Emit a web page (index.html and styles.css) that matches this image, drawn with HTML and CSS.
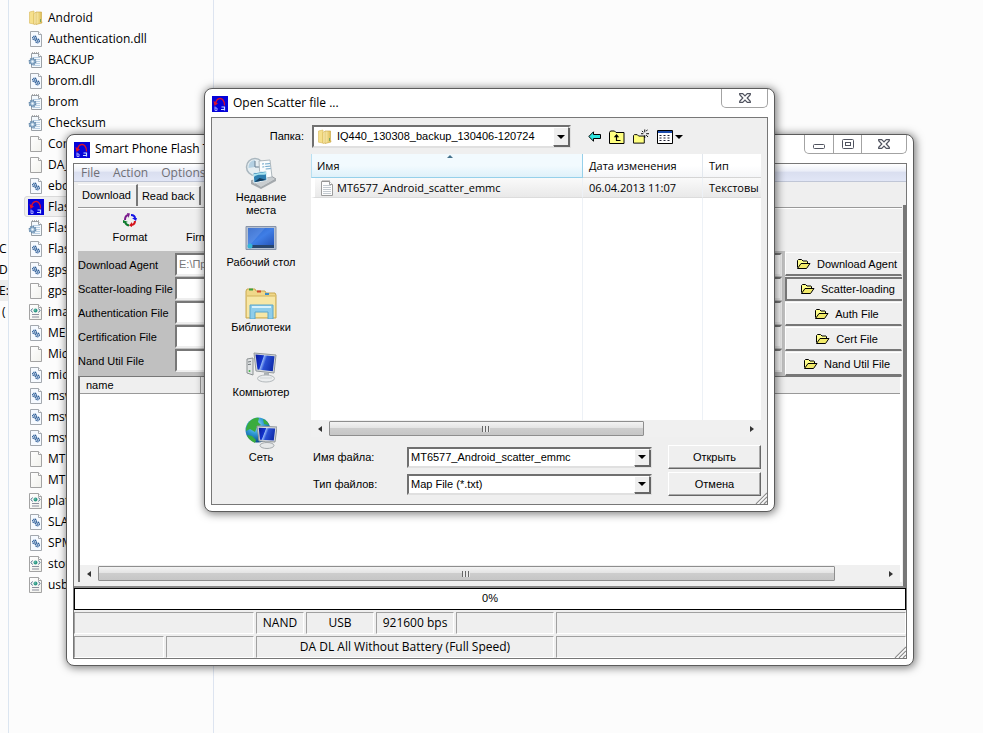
FILE: index.html
```html
<!DOCTYPE html>
<html lang="ru">
<head>
<meta charset="utf-8">
<title>Smart Phone Flash Tool</title>
<link rel="stylesheet" href="styles.css">
</head>
<body>
<svg class="sprite" aria-hidden="true">
  <defs>
    <linearGradient id="gold" x1="0" x2="1"><stop offset="0" stop-color="#fbeeb0"/><stop offset="1" stop-color="#dcb94e"/></linearGradient>
    <linearGradient id="paper" x1="0" y1="0" x2="1" y2="1"><stop offset="0" stop-color="#fff"/><stop offset="1" stop-color="#f1f1ec"/></linearGradient>
    <linearGradient id="screen" x1="0" y1="0" x2="1" y2="1"><stop offset="0" stop-color="#2a62c8"/><stop offset=".5" stop-color="#3f7ee6"/><stop offset="1" stop-color="#2350b4"/></linearGradient>
    <linearGradient id="deep" x1="0" x2="1" y2=".3"><stop offset="0" stop-color="#0a1a9c"/><stop offset=".4" stop-color="#1334cc"/><stop offset=".45" stop-color="#8fb2f6"/><stop offset=".6" stop-color="#2a50d4"/><stop offset="1" stop-color="#1230b0"/></linearGradient>
    <radialGradient id="globe" cx=".4" cy=".3" r=".7"><stop offset="0" stop-color="#a8e4fa"/><stop offset=".5" stop-color="#2f9ad6"/><stop offset="1" stop-color="#0b4c8c"/></radialGradient>
  </defs>
  <symbol id="i-folder" viewBox="0 0 16 16">
    <path d="M1.500 2 6 1v13l-4.500-.8z" fill="#f6e08c" stroke="#d9b95a" stroke-width=".6"/>
    <path d="M6 3.500 7.500 2.500h4V13L6 14.500z" fill="#fff3bd" stroke="#d3b04a" stroke-width=".6"/>
    <path d="M8 2h5.500v8.500L14 13l-6 1.500z" fill="url(#gold)" stroke="#c9a440" stroke-width=".6"/>
    <path d="M12.500 9v3" stroke="#7fa85c"/>
  </symbol>
  <symbol id="i-page" viewBox="0 0 16 16">
    <path d="M2.500.5h8l3 3v12h-11z" fill="url(#paper)" stroke="#a3a3a3"/><path d="M10.500.5v3h3" fill="#fff" stroke="#a3a3a3"/>
  </symbol>
  <symbol id="i-dll" viewBox="0 0 16 16">
    <path d="M2.500.5h8l3 3v12h-11z" fill="#f6faff" stroke="#a3a8ae"/><path d="M10.500.5v3h3" fill="#fff" stroke="#a3a8ae"/>
    <circle cx="6.500" cy="7" r="1.900" fill="#cfe0f3" stroke="#2e5d96" stroke-width="1.200" stroke-dasharray="1.200 .5"/><circle cx="6.500" cy="7" r=".7" fill="#24508a"/>
    <circle cx="9.500" cy="10" r="1.900" fill="#cfe0f3" stroke="#2e5d96" stroke-width="1.200" stroke-dasharray="1.200 .5"/><circle cx="9.500" cy="10" r=".7" fill="#24508a"/>
  </symbol>
  <symbol id="i-ini" viewBox="0 0 16 16">
    <path d="M3.500 1.500h7l3 3v11h-10z" fill="#f4f9fd" stroke="#9aa0a6"/><path d="M10.500 1.500v3h3" fill="#fff" stroke="#9aa0a6"/>
    <path d="M4 .8h1m1 0h1m1 0h1m1 0h1" stroke="#8d8d8d"/>
    <path d="M5 5.500h7M5 7.500h7M5 9.500h7M5 11.500h7M5 13.500h7" stroke="#a9c4dc" stroke-width=".8"/>
    <circle cx="4.500" cy="9.500" r="3" fill="#bdd3e6" stroke="#6489ab" stroke-width="1.800" stroke-dasharray="1.400 .9"/><circle cx="4.500" cy="9.500" r="2.500" fill="#a9c5dd" stroke="#5c82a6" stroke-width=".7"/><circle cx="4.500" cy="9.500" r="1" fill="#f5f9fc"/>
  </symbol>
  <symbol id="i-img" viewBox="0 0 16 16">
    <path d="M1.500.5h9l3 3v12h-12z" fill="url(#paper)" stroke="#a3a3a3"/><path d="M10.500.5v3h3" fill="#fff" stroke="#a3a3a3"/>
    <circle cx="7.500" cy="6.500" r="2" fill="#2f9a86"/><circle cx="7" cy="6" r=".7" fill="#8fd6c4"/>
    <path d="M4.500 4.500l-1.500 2 1.500 2M10.500 4.500l1.500 2-1.500 2" stroke="#4d6a8a" fill="none"/>
    <path d="M4 10.500h7M4 13h7" stroke="#8b8f9d"/>
  </symbol>
  <symbol id="i-app" viewBox="0 0 16 16">
    <path d="M0 0h16v16H0z" fill="#0503d8"/>
    <path d="M3.500 7C5 2 9 1.500 11 4c1.200 1.500 1.500 3.500 1.500 5.500" fill="none" stroke="#d8102e" stroke-width="1.300"/><path d="M1.500 5l1 5 3.500-2.500z" fill="#e0102a"/>
    <path d="M3 10.500v4h2v-2.500H3" fill="none" stroke="#a5a4ff"/><path d="M9.500 11h3v3.500M9 13.500h3.500" fill="none" stroke="#c9dcff" stroke-width="1.200"/>
  </symbol>
  <symbol id="i-text" viewBox="0 0 16 16">
    <path d="M2.500 1.500h8l3 3v11h-11z" fill="#fdfdfd" stroke="#9b9b9b"/><path d="M10.500 1.500v3h3" fill="#fff" stroke="#9b9b9b"/>
    <path d="M3.500 .8h1m1 0h1m1 0h1m1 0h1" stroke="#777"/>
    <path d="M4 5.500h8M4 7.500h8M4 9.500h8M4 11.500h8M4 13.500h8" stroke="#b4bcc4" stroke-width=".8"/>
  </symbol>
  <symbol id="i-open" viewBox="0 0 15 12">
    <path d="M1.500 9.500v-7l1-1h3l1.500 1.500h4l.5.5V5.500" fill="#ffff8c" stroke="#000"/>
    <path d="M1.500 10.500 5 5.500h9L10.500 10.500z" fill="#f2ea6a" stroke="#000"/>
  </symbol>
  <symbol id="i-format" viewBox="0 0 14 14">
    <path d="M2 7C2 4 3 2.500 5 2" fill="none" stroke="#7a1a8c" stroke-width="2"/><path d="M4 0l3 .5L5.500 5z" fill="#7a1a8c"/>
    <path d="M8 2c2.500 0 4 1.500 4 3.500" fill="none" stroke="#1414e6" stroke-width="2"/><path d="M9 5h5l-1 3z" fill="#1414e6"/>
    <path d="M12 8c0 2.500-1 3.500-3 4" fill="none" stroke="#d4141c" stroke-width="2"/><path d="M9 9v5l-3-1.500z" fill="#d4141c"/>
    <path d="M6 12.500C3.500 12 2.500 11 2 9" fill="none" stroke="#0c7a2c" stroke-width="2"/><path d="M0 10V7l5 2z" fill="#0c7a2c"/>
  </symbol>
  <symbol id="i-close" viewBox="0 0 12 10">
    <path d="M.7.700h3L6 3 8.300.700h3v1L8.200 5l3.100 3.300v1h-3L6 7 3.700 9.300h-3v-1L3.800 5 .7 1.700z" fill="#fff" stroke="#50535f" stroke-width="1.200"/>
  </symbol>
  <symbol id="i-min" viewBox="0 0 12 5"><rect x=".5" y=".5" width="11" height="4" rx="1" fill="#fff" stroke="#50535f"/></symbol>
  <symbol id="i-max" viewBox="0 0 12 10"><rect x=".5" y=".5" width="11" height="9" rx="1" fill="#fff" stroke="#50535f"/><rect x="3.500" y="3.500" width="5" height="3" fill="#fff" stroke="#50535f"/></symbol>
  <symbol id="i-grip" viewBox="0 0 12 12"><path d="M1 12 12 1M5 12l7-7M9 12l3-3" stroke="#8e8e8e" stroke-width="1.200"/><path d="M2.500 12 12 2.500M6.500 12 12 6.500" stroke="#fff"/></symbol>
  <symbol id="i-back" viewBox="0 0 13 11"><path d="M.8 5.500 5.500.800V3.500h7v4h-7v2.700z" fill="#2fe6e0" stroke="#000"/></symbol>
  <symbol id="i-up" viewBox="0 0 16 14"><path d="M.5 13.500v-11l1-1.500h4l1.500 1.500h8v11z" fill="#ffff80" stroke="#000"/><path d="M11.500 10.500h-4V5" fill="none" stroke="#000" stroke-width="1.200"/><path d="M4.800 7.200h5.400L7.500 4z"/></symbol>
  <symbol id="i-new" viewBox="0 0 17 16"><path d="M.5 14.500v-8l1-1h3l1.500 1.500h6v7.500z" fill="#ffff80" stroke="#000"/><path d="M12.500 0v3m0 3v3M8.500 4.500h2.500m3 0h3M9.500 1.500l1.500 1.500m3-1.500L15.500.500M14 6l2 2" stroke="#000"/></symbol>
  <symbol id="i-view" viewBox="0 0 16 14"><path d="M.5.500h15v13H.5z" fill="#fff" stroke="#000"/><path d="M1 1h14v2H1z" fill="#1c4cac"/><path d="M2.500 5.500h2m2 0h2m2 0h2M2.500 8h2m2 0h2m2 0h2M2.500 10.500h2m2 0h2m2 0h2" stroke="#223"/></symbol>
  <symbol id="i-recent" viewBox="0 0 32 32">
    <path d="M6 24 23 17l8 5-15 9z" fill="#c9cdd0" stroke="#9ba0a4"/><path d="M6 24v3l10 5 15-8v-2l-15 8z" fill="#a4a9ad"/>
    <circle cx="10" cy="10" r="8.500" fill="#e6eef2" stroke="#a9b6be" stroke-width="1.500"/><path d="M10 10V3A7 7 0 0 0 3.500 11z" fill="#b4d0e2"/><path d="M10 4v6h5" fill="none" stroke="#667d90"/>
    <path d="M14 4l11-1 2 17-12 2z" fill="#fafcfd" stroke="#aeb8be"/><path d="M20 7l5-.4M20.300 9.500l5-.4M20.700 12l5-.4M17 7l2-.2M17.300 10l2-.2" stroke="#6aa4c8"/>
    <path d="M8 16l13-2 1 9-13 3z" fill="#2f7fb0" stroke="#e8f2f6"/><path d="M9 20c4-4 8-1 12.500-3l-.8-2L9 17z" fill="#a8e4f0"/><path d="M9.500 25l5-4 7 2z" fill="#123c60"/>
  </symbol>
  <symbol id="i-desktop" viewBox="0 0 32 32">
    <path d="M1 4.500h30v23H1z" fill="#b4c0d2" stroke="#8793a8"/><path d="M3 6h26v19H3z" fill="url(#screen)"/><path d="M3 6h17L5 23H3z" fill="#fff" opacity=".12"/><path d="M3 23h26v3H3z" fill="#29466e"/><circle cx="5" cy="24" r="2.500" fill="#35b4d8"/>
  </symbol>
  <symbol id="i-lib" viewBox="0 0 32 32">
    <path d="M1 4l1-2h8l1 2h1l1 0h7l1 2h9l1 2v23H1z" fill="#f0d88a" stroke="#c8a850"/><path d="M2 9h28v21H2z" fill="#f7e7a6"/><path d="M2 9h28" stroke="#d2b45c"/>
    <path d="M4 2.500h4" stroke="#3fa03c" stroke-width="2"/><path d="M12 4.500h4" stroke="#d0482c" stroke-width="2"/><path d="M20 7h4" stroke="#3c8cc8" stroke-width="2"/>
    <path d="M5 32V18h23v14h-5v-7H10v7z" fill="#8fcdea" stroke="#5ba6cc"/><path d="M7 20h19" stroke="#d8f2fc" stroke-width="2"/>
  </symbol>
  <symbol id="i-pc" viewBox="0 0 32 32">
    <path d="M2 7l6-1v17l-6-2z" fill="#e0e3e4" stroke="#8b9092"/><path d="M3 10l3-.5M3 12.500l3-.3" stroke="#70787c"/><circle cx="4.500" cy="19" r="1" fill="#48b848"/>
    <path d="M9 1l22 2-2 18-18-2z" fill="#d6dadd" stroke="#92989c"/><path d="M10.500 2.500l19 1.800-1.700 15-15.300-1.900z" fill="url(#deep)"/>
    <path d="M19 20.500l5 .5v4h-5z" fill="#aab0b4"/><ellipse cx="21" cy="26.500" rx="8.500" ry="3.500" fill="#eceeef" stroke="#b4b9bc"/><path d="M15 26h12" stroke="#cfd4d6"/>
  </symbol>
  <symbol id="i-net" viewBox="0 0 32 32">
    <circle cx="13" cy="13" r="12.500" fill="url(#globe)"/><path d="M4 5c4-4 7-5 10-4l-1 4 3 3-4 2-2 5-5-3-4 2c0-4 1-6 3-9zM2 18l5 1 4 4-1 3c-4-2-7-4-8-8zM18 2c3 1 5 3 6 6l-5-1z" fill="#3aac3e"/>
    <path d="M12 9l20 1-2 15-16-1z" fill="#d9dde0" stroke="#8e9498"/><path d="M13.700 10.700l16.500.8-1.400 12-13.800-.8z" fill="url(#deep)"/><path d="M20 24h5v4h-5z" fill="#aab0b4"/><ellipse cx="22" cy="28.500" rx="7" ry="3" fill="#e6e8e9" stroke="#a4a9ac"/>
  </symbol>
</svg>

<div class="explorer">
  <nav class="drives">
    <span>C</span><span>D</span><span class="current">E:</span><span>(</span>
  </nav>
  <ul class="files">
    <li><svg><use href="#i-folder"/></svg>Android</li>
    <li><svg><use href="#i-dll"/></svg>Authentication.dll</li>
    <li><svg><use href="#i-ini"/></svg>BACKUP</li>
    <li><svg><use href="#i-dll"/></svg>brom.dll</li>
    <li><svg><use href="#i-ini"/></svg>brom</li>
    <li><svg><use href="#i-ini"/></svg>Checksum</li>
    <li><svg><use href="#i-page"/></svg>Cor</li>
    <li><svg><use href="#i-page"/></svg>DA_</li>
    <li><svg><use href="#i-dll"/></svg>ebo</li>
    <li class="selected"><svg><use href="#i-app"/></svg>Flas</li>
    <li><svg><use href="#i-ini"/></svg>Flas</li>
    <li><svg><use href="#i-dll"/></svg>Flas</li>
    <li><svg><use href="#i-dll"/></svg>gps</li>
    <li><svg><use href="#i-page"/></svg>gps</li>
    <li><svg><use href="#i-img"/></svg>ima</li>
    <li><svg><use href="#i-dll"/></svg>ME</li>
    <li><svg><use href="#i-page"/></svg>Mic</li>
    <li><svg><use href="#i-dll"/></svg>mic</li>
    <li><svg><use href="#i-dll"/></svg>msv</li>
    <li><svg><use href="#i-dll"/></svg>msv</li>
    <li><svg><use href="#i-dll"/></svg>msv</li>
    <li><svg><use href="#i-page"/></svg>MT</li>
    <li><svg><use href="#i-page"/></svg>MT</li>
    <li><svg><use href="#i-img"/></svg>plat</li>
    <li><svg><use href="#i-dll"/></svg>SLA</li>
    <li><svg><use href="#i-dll"/></svg>SPM</li>
    <li><svg><use href="#i-img"/></svg>stor</li>
    <li><svg><use href="#i-img"/></svg>usb</li>
  </ul>
</div>

<section class="window main">
  <header class="titlebar">
    <svg class="app"><use href="#i-app"/></svg>
    <h1>Smart Phone Flash T</h1>
    <div class="caption">
      <button type="button" aria-label="Minimize"><svg class="min"><use href="#i-min"/></svg></button>
      <button type="button" aria-label="Maximize"><svg class="max"><use href="#i-max"/></svg></button>
      <button type="button" class="close" aria-label="Close"><svg class="x"><use href="#i-close"/></svg></button>
    </div>
  </header>
  <div class="client">
    <nav class="menubar">
      <button type="button">File</button><button type="button">Action</button><button type="button">Options</button>
    </nav>
    <div class="tabs">
      <button type="button" class="tab active">Download</button>
      <button type="button" class="tab">Read back</button>
    </div>
    <div class="panel">
      <div class="tools">
        <button type="button"><svg><use href="#i-format"/></svg>Format</button>
        <button type="button" class="firm">Firm</button>
      </div>
      <div class="agents">
        <div class="fields">
          <label for="da">Download Agent</label><input id="da" type="text" value="E:\Пр">
          <label for="sc">Scatter-loading File</label><input id="sc" type="text">
          <label for="au">Authentication File</label><input id="au" type="text">
          <label for="ce">Certification File</label><input id="ce" type="text">
          <label for="na">Nand Util File</label><input id="na" type="text">
        </div>
        <div class="actions">
          <button type="button"><svg><use href="#i-open"/></svg>Download Agent</button>
          <button type="button" class="focus"><svg><use href="#i-open"/></svg>Scatter-loading</button>
          <button type="button"><svg><use href="#i-open"/></svg>Auth File</button>
          <button type="button"><svg><use href="#i-open"/></svg>Cert File</button>
          <button type="button"><svg><use href="#i-open"/></svg>Nand Util File</button>
        </div>
      </div>
      <div class="listview">
        <table class="regions"><thead><tr><th class="name">name</th><th></th></tr></thead></table>
        <div class="scroll"><i class="arrow left"></i><div class="track"><div class="thumb"></div></div><i class="arrow right"></i></div>
      </div>
    </div>
    <div class="progress">0%</div>
    <div class="status top"><span></span><span>NAND</span><span>USB</span><span>921600 bps</span><span></span><span></span></div>
    <div class="status bottom"><span></span><span></span><span>DA DL All Without Battery (Full Speed)</span><span></span></div>
    <svg class="grip"><use href="#i-grip"/></svg>
  </div>
</section>

<section class="window dialog" role="dialog" aria-labelledby="dlg">
  <header class="titlebar">
    <svg class="app"><use href="#i-app"/></svg>
    <h2 id="dlg">Open Scatter file ...</h2>
    <div class="caption"><button type="button" class="close" aria-label="Close"><svg class="x"><use href="#i-close"/></svg></button></div>
  </header>
  <div class="client">
    <div class="lookin">
      <label for="folder">Папка:</label>
      <div class="combo tall"><svg><use href="#i-folder"/></svg><select id="folder"><option>IQ440_130308_backup_130406-120724</option></select><i class="drop"></i></div>
      <div class="toolbar">
        <button type="button" aria-label="Back"><svg class="back"><use href="#i-back"/></svg></button>
        <button type="button" aria-label="Up"><svg class="up"><use href="#i-up"/></svg></button>
        <button type="button" aria-label="New folder"><svg class="new"><use href="#i-new"/></svg></button>
        <button type="button" aria-label="View"><svg class="up"><use href="#i-view"/></svg><i class="caret"></i></button>
      </div>
    </div>
    <div class="body">
      <nav class="places">
        <button type="button"><svg><use href="#i-recent"/></svg>Недавние<br>места</button>
        <button type="button"><svg><use href="#i-desktop"/></svg>Рабочий стол</button>
        <button type="button"><svg><use href="#i-lib"/></svg>Библиотеки</button>
        <button type="button"><svg><use href="#i-pc"/></svg>Компьютер</button>
        <button type="button"><svg><use href="#i-net"/></svg>Сеть</button>
      </nav>
      <div class="content">
        <div class="browser">
          <table>
            <thead><tr><th class="sorted">Имя</th><th class="date">Дата изменения</th><th class="type">Тип</th></tr></thead>
            <tbody>
              <tr class="item"><td><span class="file"><svg><use href="#i-text"/></svg>MT6577_Android_scatter_emmc</span></td><td>06.04.2013 11:07</td><td>Текстовы</td></tr>
              <tr class="rest"><td></td><td></td><td></td></tr>
            </tbody>
          </table>
          <div class="scroll"><i class="arrow left"></i><div class="track"><div class="thumb"></div></div><i class="arrow right"></i></div>
        </div>
        <form class="form">
          <label for="fname">Имя файла:</label>
          <div class="combo"><input id="fname" type="text" value="MT6577_Android_scatter_emmc"><i class="drop"></i></div>
          <button type="button">Открыть</button>
          <label for="ftype">Тип файлов:</label>
          <div class="combo"><select id="ftype"><option>Map File (*.txt)</option></select><i class="drop"></i></div>
          <button type="button">Отмена</button>
        </form>
      </div>
    </div>
    <svg class="grip"><use href="#i-grip"/></svg>
  </div>
</section>
</body>
</html>
```
FILE: styles.css
```css
* { box-sizing: border-box; }

:root {
  --ui: "Open Sans", "Noto Sans", sans-serif;
  --classic: "Liberation Sans", Arial, sans-serif;
  --face: #efefef;
}

body {
  margin: 0;
  position: relative;
  min-height: 100vh;
  background: #fcfcfc;
  color: #000;
  font: 12px/16px var(--ui);
  overflow: hidden;
}

button, input, select { font: inherit; color: inherit; margin: 0; padding: 0; border: 0; border-radius: 0; background: none; outline: 0; }
h1, h2 { margin: 0; font: inherit; }
svg { display: block; flex: none; width: 16px; height: 16px; }
.sprite { position: absolute; width: 0; height: 0; }

/* File manager behind the windows */
.explorer { display: flex; min-height: 100vh; }
.drives { width: 9px; padding-top: 238px; border-right: 1px solid #dbe5f0; overflow: hidden; }
.drives span { display: block; height: 21px; line-height: 21px; text-indent: -1px; }
.drives span:last-child { text-indent: 2px; }
.drives .current { background: #ececec; }
.files { width: 205px; margin: 0; padding: 7px 0 0 15px; border-right: 1px solid #dde4f0; list-style: none; }
.files li { display: flex; align-items: center; gap: 4px; height: 21px; padding-left: 3px; white-space: nowrap; border: 1px solid transparent; border-radius: 3px; }
.files .selected { background: #f0f0f0; border-color: #dadada; }

/* Window frame */
.window {
  position: absolute;
  padding: 0 6px 6px;
  border: 1px solid #5c5c5c;
  border-radius: 8px;
  background: #fff;
  box-shadow: 1px 1px 8px 1px rgba(0, 0, 0, .5);
}
.main { left: 66px; right: 69px; top: 134px; }
.dialog { left: 204px; right: 208px; top: 88px; }
.titlebar { display: flex; align-items: center; gap: 5px; height: 28px; padding-left: 1px; }
.titlebar .app { margin-top: 1px; }
.caption { display: flex; align-self: flex-start; margin-left: auto; border: 1px solid #a3a3a3; border-top: 0; border-radius: 0 0 5px 5px; }
.caption button { display: flex; align-items: center; justify-content: center; width: 28px; height: 18px; }
.caption button + button { border-left: 1px solid #a3a3a3; }
.caption .close { width: 45px; }
.min { width: 12px; height: 5px; margin-top: 4px; }
.max, .x { width: 12px; height: 10px; }
.client { position: relative; border: 1px solid #777; background: var(--face); }
.grip { position: absolute; right: 0; bottom: 0; width: 12px; height: 12px; }

/* Flash tool */
.menubar { display: flex; gap: 13px; height: 18px; padding-left: 7px; color: #6f6f76; background: linear-gradient(#fff, #eceff8 40%, #dadff0 50%, #e1e6f6); border-bottom: 1px solid #c0c6d6; }
.main .tabs, .main .panel { font: 11px/14px var(--classic); }
.tabs { display: flex; align-items: flex-end; height: 23px; padding: 2px 0 0 4px; }
.tab { height: 19px; padding: 0 4px; border-right: 2px solid #777; border-top: 1px solid #fff; }
.tab.active { align-self: flex-start; height: 22px; padding: 0 5px 2px 4px; }
.panel { padding: 2px 1px 4px 4px; border-right: 3px solid #777; border-bottom: 2px solid #888; }
.tools { display: flex; height: 44px; border-top: 1px solid #999; box-shadow: inset 0 1px #fff; }
.tools button { display: flex; flex-direction: column; align-items: center; justify-content: flex-end; gap: 3px; width: 104px; height: 36px; }
.tools .firm { width: auto; padding-left: 4px; }
.tools svg { width: 14px; height: 14px; }
.agents { display: flex; gap: 3px; background: #c0c0c0; }
.fields { flex: 1; display: grid; grid-template-columns: 97px 1fr; grid-auto-rows: 24px; padding-top: 2px; }
.fields label { align-self: center; }
.fields input { width: 100%; height: 23px; padding: 0 2px 2px; border: 2px solid; border-color: #777 #eee #eee #777; background: #fff; color: #777; }
.actions { width: 117px; padding-top: 1px; background: var(--face); }
.actions button { display: flex; align-items: center; justify-content: center; gap: 6px; width: 100%; height: 24px; margin-bottom: 1px; padding-left: 6px; border: 1px solid; border-color: #fff transparent #777 #fff; border-bottom-width: 2px; white-space: nowrap; }
.actions button:last-child { margin: 0; }
.actions .focus { border: 2px solid #777; border-right: 0; }
.actions svg { width: 15px; height: 12px; }
.listview { display: flex; flex-direction: column; min-height: 206px; padding-right: 1px; border: solid #777; border-width: 1px 1px 0 2px; border-right-color: #fff; background: #fff; }
.regions { width: 100%; border-collapse: collapse; background: var(--face); }
.regions th { height: 16px; padding: 0 0 0 6px; font-weight: normal; text-align: left; border-bottom: 1px solid #999; }
.regions .name { width: 120px; border-right: 1px solid #999; }
.listview .scroll { margin-top: auto; }
.progress { height: 22px; border: 1px solid #000; background: #fff; text-align: center; font: 11px/19px var(--classic); }
.status { display: grid; gap: 2px; padding-top: 2px; text-align: center; }
.status.top { grid-template-columns: 180px 48px 68px 78px 98px 1fr; }
.status.bottom { grid-template-columns: 90px 88px 298px 1fr; }
.status span { height: 22px; line-height: 20px; border: 1px solid; border-color: #a0a0a0 #fff #fff #a0a0a0; }

/* Scroll bars */
.scroll { display: flex; align-items: center; height: 17px; background: #f0f0f0; }
.track { flex: 1; height: 15px; }
.thumb { display: flex; align-items: center; justify-content: center; height: 15px; border: 1px solid #8e8e8e; border-radius: 1px; background: linear-gradient(#f3f3f3, #e4e4e4 45%, #cdcdcd 50%, #c6c6c6); }
.thumb::before { content: ""; width: 8px; height: 6px; background: repeating-linear-gradient(90deg, #666 0 1px, #e8e8e8 1px 3px); }
.main .thumb { width: 94%; }
.dialog .thumb { width: 76%; }
.arrow { width: 18px; height: 17px; display: flex; align-items: center; justify-content: center; }
.arrow::before { content: ""; border: 4px solid transparent; border-width: 3px 4px; }
.arrow.left::before { border-right-color: #333; border-left: 0; }
.arrow.right::before { border-left-color: #333; border-right: 0; }

/* Open dialog */
.dialog .client { font: 11px/13px var(--classic); padding: 7px 6px 8px 0; }
.lookin { display: flex; align-items: center; }
.lookin label { width: 92px; margin-right: 8px; text-align: right; }
.combo { display: flex; align-items: center; height: 21px; border: 2px solid; border-color: #707070 #e0e0e0 #e0e0e0 #707070; background: #fff; position: relative; }
.combo.tall { width: 259px; height: 23px; }
.combo.tall svg { margin-left: 3px; }
.combo input, .combo select { flex: 1; min-width: 0; height: 100%; padding: 0 18px 0 2px; appearance: none; }
.combo.tall select { padding-left: 4px; }
.drop { position: absolute; right: 0; top: 0; bottom: 0; width: 16px; display: flex; align-items: center; justify-content: center; background: var(--face); border: 1px solid; border-color: #fff #666 #666 #fff; box-shadow: 1px 1px #666; pointer-events: none; }
.drop::before, .caret { content: ""; border: 4px solid transparent; border-top-color: #000; border-bottom: 0; }
.toolbar { display: flex; align-items: center; gap: 8px; margin-left: 17px; }
.toolbar button { display: flex; align-items: center; gap: 2px; }
.back { width: 13px; height: 11px; }
.up { width: 16px; height: 14px; }
.new { width: 16px; height: 16px; }
.body { display: flex; margin-top: 6px; }
.places { width: 98px; padding-top: 3px; }
.places button { display: flex; flex-direction: column; align-items: center; gap: 2px; width: 100%; height: 65px; line-height: 13px; }
.places svg { width: 32px; height: 32px; }
.content { flex: 1; min-width: 0; }
.browser { margin-left: 1px; background: #fff; font: 11px/16px var(--ui); }
.browser table { width: 100%; table-layout: fixed; border-spacing: 0; }
.browser th { height: 24px; padding: 0 6px; font-weight: normal; text-align: left; background: linear-gradient(#fff 50%, #f5f6f8); border-right: 1px solid #e3e8ee; border-bottom: 1px solid #d5d5d5; position: relative; }
.browser .sorted { padding-left: 5px; background: linear-gradient(#f2fafe 50%, #dff1fa); border-color: #96d0ea; border-left: 1px solid #b8e0f2; }
.sorted::before { content: ""; position: absolute; left: 50%; top: 1px; border: 3px solid transparent; border-bottom-color: #45728c; border-top: 0; }
.browser .date { width: 120px; }
.browser .type { width: 58px; border-right: 0; }
.browser td { padding: 0 0 0 6px; white-space: nowrap; border-right: 1px solid #edf1f6; }
.browser td:last-child { border-right: 0; }
.browser .item td { height: 20px; background: linear-gradient(#fafafa, #e9e9e9); border-bottom: 1px solid #dcdcdc; }
.browser .item td:first-child { padding-left: 4px; border-left: 4px solid #fff; }
.file { display: flex; align-items: center; gap: 2px; }
.rest td { height: 222px; }
.form { display: grid; grid-template-columns: 95px minmax(0, 1fr) 93px; column-gap: 2px; row-gap: 3px; align-items: center; padding-top: 8px; }
.form label { padding-left: 3px; }
.form .combo { margin-right: 14px; }
.form button { height: 24px; border: 1px solid; border-color: #fff #666 #666 #fff; box-shadow: inset -1px -1px #aaa; text-align: center; }
```
